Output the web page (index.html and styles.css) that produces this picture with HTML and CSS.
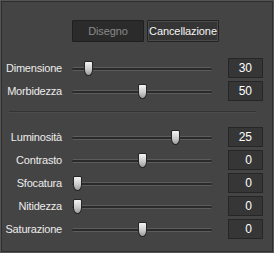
FILE: index.html
```html
<!DOCTYPE html>
<html lang="it">
<head>
    <meta charset="UTF-8">
    <title>Pennello</title>
    <link rel="stylesheet" href="styles.css">
</head>
<body>
    <div class="panel">
        <div class="modes">
            <button class="mode mode-off">Disegno</button>
            <button class="mode mode-on">Cancellazione</button>
        </div>

        <div class="rows">
            <div class="row">
                <span class="label">Dimensione</span>
                <div class="track"><span class="thumb" style="left: 11px"></span></div>
                <span class="value">30</span>
            </div>
            <div class="row">
                <span class="label">Morbidezza</span>
                <div class="track"><span class="thumb" style="left: 65px"></span></div>
                <span class="value">50</span>
            </div>
        </div>

        <div class="sep"></div>

        <div class="rows">
            <div class="row">
                <span class="label">Luminosità</span>
                <div class="track"><span class="thumb" style="left: 98px"></span></div>
                <span class="value">25</span>
            </div>
            <div class="row">
                <span class="label">Contrasto</span>
                <div class="track"><span class="thumb" style="left: 65px"></span></div>
                <span class="value">0</span>
            </div>
            <div class="row">
                <span class="label">Sfocatura</span>
                <div class="track"><span class="thumb" style="left: 0px"></span></div>
                <span class="value">0</span>
            </div>
            <div class="row">
                <span class="label">Nitidezza</span>
                <div class="track"><span class="thumb" style="left: 0px"></span></div>
                <span class="value">0</span>
            </div>
            <div class="row">
                <span class="label">Saturazione</span>
                <div class="track"><span class="thumb" style="left: 65px"></span></div>
                <span class="value">0</span>
            </div>
        </div>
    </div>
</body>
</html>
```

FILE: styles.css
```css
html, body {
    margin: 0;
    padding: 0;
    background-color: #444;
}
body {
    width: 274px;
    height: 253px;
    font-family: "Liberation Sans", Arial, sans-serif;
    font-size: 11px;
    color: #ececec;
}
.panel {
    box-sizing: border-box;
    width: 274px;
    height: 253px;
    border: 1px solid #555;
    box-shadow: inset 0 0 0 1px #2e2e2e;
    padding-top: 19px;
}
.modes {
    display: flex;
    gap: 3px;
    padding-left: 71px;
}
.mode {
    box-sizing: border-box;
    width: 72px;
    height: 22px;
    padding: 0;
    margin: 0;
    font-family: "Liberation Sans", Arial, sans-serif;
    font-size: 11px;
    letter-spacing: -0.1px;
    border-radius: 1px;
}
.mode-off {
    background-color: #2b2b2b;
    border: 1px solid #1f1f1f;
    color: #8a8a8a;
}
.mode-on {
    background-color: #353535;
    border: 1px solid #232323;
    box-shadow: inset 0 0 0 1px #4a4a4a;
    color: #f4f4f4;
}
.rows {
    display: flex;
    flex-direction: column;
    gap: 3px;
}
.modes + .rows {
    margin-top: 16px;
}
.row {
    display: grid;
    grid-template-columns: 61px 140px 35px;
    column-gap: 10px;
    align-items: center;
    height: 20px;
}
.row .value {
    margin-left: 6px;
}
.label {
    text-align: right;
    letter-spacing: -0.2px;
    white-space: nowrap;
}
.track {
    position: relative;
    box-sizing: border-box;
    height: 4px;
    margin-top: 2px;
    background-color: #2a2a2a;
    border: 1px solid #5c5c5c;
    border-left-color: #333;
    border-right-color: #333;
}
.thumb {
    position: absolute;
    top: -7px;
    box-sizing: border-box;
    width: 9px;
    height: 15px;
    background: linear-gradient(#f4f4f4, #c8c8c8 60%, #9a9a9a);
    border: 1px solid #262626;
    border-radius: 2px 2px 5px 5px / 2px 2px 7px 7px;
}
.value {
    box-sizing: border-box;
    height: 20px;
    width: 35px;
    background-color: #363636;
    border: 1px solid #262626;
    color: #fff;
    font-size: 12px;
    text-align: right;
    padding-right: 10px;
    line-height: 18px;
}
.sep {
    height: 1px;
    margin: 10px 17px 15px 8px;
    background-color: #333;
    box-shadow: 0 1px 0 #4c4c4c;
}
```
